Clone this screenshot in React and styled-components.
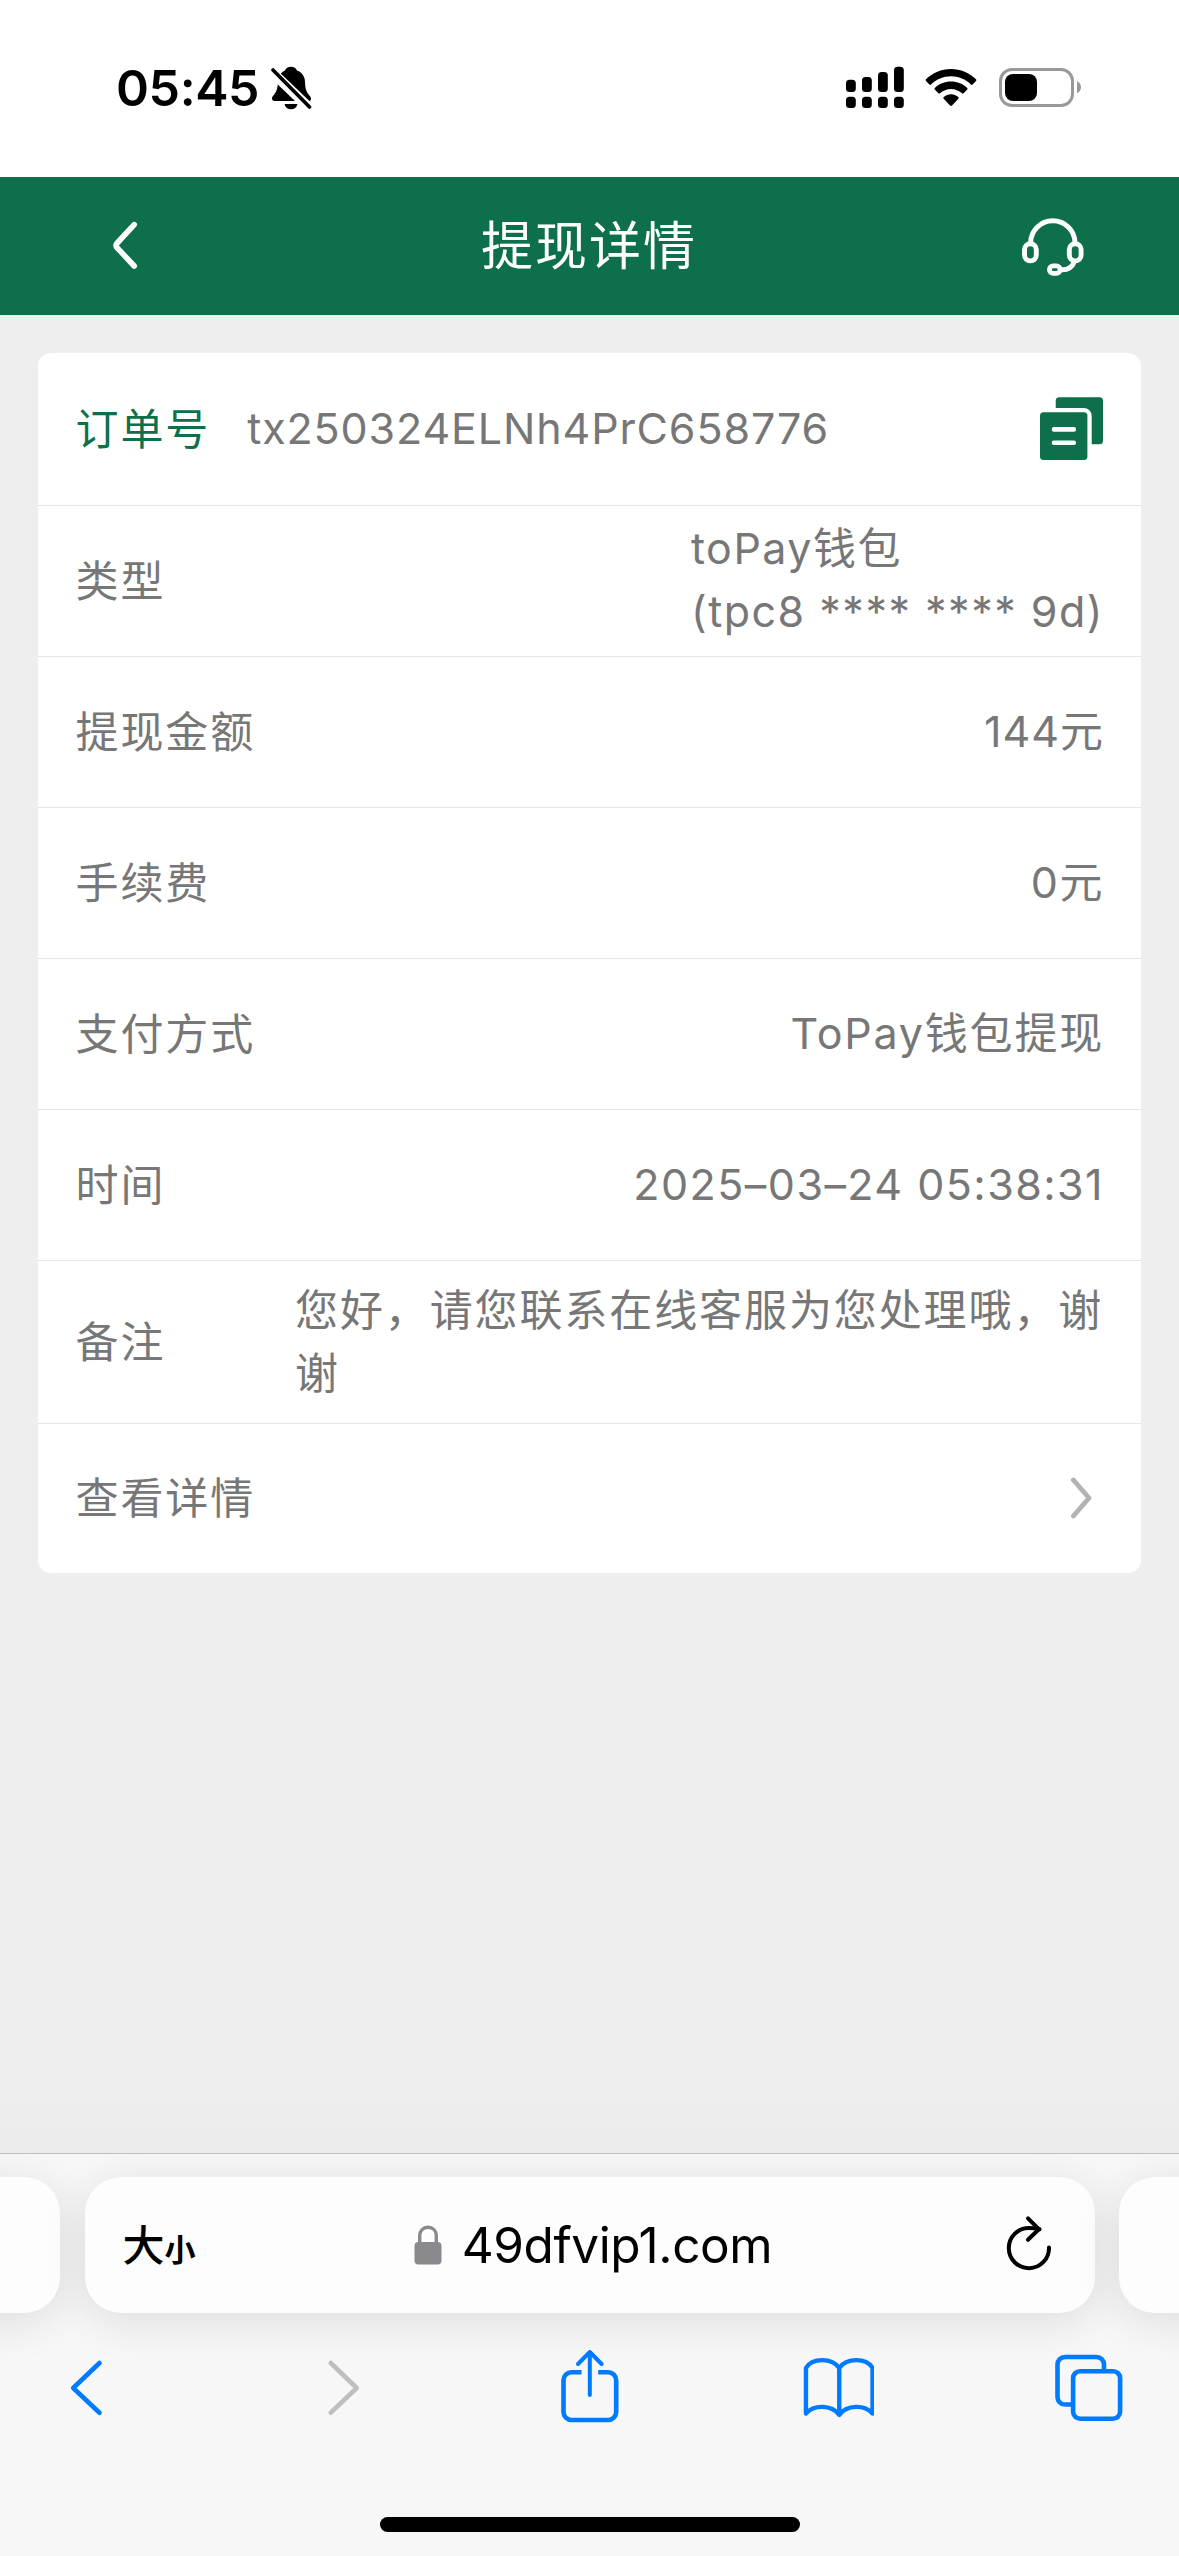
import React from "react";
import styled, { createGlobalStyle } from "styled-components";

const GREEN = "#0e704a";
const BLUE = "#007aff";
const SANS = `Inter, "Noto Sans CJK SC", sans-serif`;

const GlobalStyle = createGlobalStyle`
  *, *::before, *::after { box-sizing: border-box; }
  html, body { margin: 0; padding: 0; background: #eeeeee; }
  body { font-family: ${SANS}; }
  svg { display: block; flex: none; }
`;

const Screen = styled.div`
  width: 1179px;
  height: 2556px;
  display: flex;
  flex-direction: column;
  background: #eeeeee;
  overflow: hidden;
`;

const StatusBar = styled.header`
  height: 177px;
  padding: 0 98px 2px 116px;
  display: flex;
  align-items: center;
  justify-content: space-between;
  background: #fff;
`;

const StatusGroup = styled.div`
  display: flex;
  align-items: center;
  gap: ${(p) => p.$gap}px;
`;

const Clock = styled.span`
  width: 142px;
  font-size: 50px;
  line-height: 60px;
  font-weight: 600;
  letter-spacing: -0.4px;
  color: #000;
  white-space: nowrap;
`;

const NavBar = styled.nav`
  height: 138px;
  padding: 0 93px 0 109px;
  display: grid;
  grid-template-columns: 1fr auto 1fr;
  align-items: center;
  background: ${GREEN};
`;

const NavButton = styled.button`
  border: 0;
  padding: 0;
  background: none;
  justify-self: ${(p) => p.$side};
`;

const NavTitle = styled.h1`
  margin: 2px 0 0 -17px;
  font-size: 52px;
  line-height: 70px;
  font-weight: 400;
  letter-spacing: 2px;
  color: #fff;
`;

const Main = styled.main`
  flex: 1;
  padding: 38px 38px 0;
  background: linear-gradient(#eeeeee 0, #eeeeee 1770px, #ebebeb 100%);
`;

const Card = styled.section`
  border-radius: 13px;
  background: #fff;
  overflow: hidden;
`;

const Row = styled.div`
  height: ${(p) => p.$height || 151}px;
  padding: 0 38px 0 37.5px;
  display: flex;
  align-items: center;
  border-bottom: ${(p) => (p.$last ? 0 : "1px solid #e4e4e4")};
`;

const Label = styled.span`
  flex: none;
  font-size: 43px;
  line-height: 63px;
  letter-spacing: 1.9px;
  color: ${(p) => (p.$accent ? GREEN : "#777")};
`;

const Value = styled.span`
  margin-left: ${(p) => (p.$start ? "37px" : "auto")};
  margin-right: ${(p) => (p.$start ? "auto" : "-1px")};
  margin-bottom: ${(p) => (p.$width ? 0 : 2)}px;
  width: ${(p) => (p.$width ? `${p.$width}px` : "auto")};
  font-size: 43px;
  line-height: 63px;
  letter-spacing: ${(p) => p.$tracking ?? 1}px;
  color: #777;
  white-space: ${(p) => (p.$width ? "normal" : "pre")};
`;

const Push = styled.span`
  margin-left: auto;
  margin-right: ${(p) => p.$inset || 0}px;
`;

const BrowserBar = styled.footer`
  height: 403px;
  border-top: 1px solid #bcbcbc;
  background: #f7f7f7;
  display: flex;
  flex-direction: column;
  overflow: hidden;
`;

const TabStrip = styled.div`
  height: 160px;
  padding-top: 23px;
  display: flex;
  justify-content: center;
  gap: 24.5px;
`;

const TabPill = styled.div`
  flex: none;
  height: 136px;
  width: ${(p) => (p.$main ? 1010 : 400)}px;
  padding: 0 42px 0 38px;
  display: grid;
  grid-template-columns: 110px 1fr 110px;
  align-items: center;
  border-radius: 36px;
  background: #fdfdfd;
  box-shadow: 0 8px 46px rgba(0, 0, 0, 0.11);
`;

const TextSize = styled.span`
  font-family: "Noto Sans CJK SC", sans-serif;
  font-size: 42px;
  line-height: 60px;
  font-weight: 500;
  color: #000;
  white-space: nowrap;
`;

const SmallGlyph = styled.span`
  font-size: 31px;
  font-weight: 700;
`;

const Address = styled.div`
  padding-left: 11px;
  display: flex;
  align-items: center;
  justify-content: center;
  gap: 20px;
`;

const Host = styled.span`
  font-size: 49.5px;
  line-height: 60px;
  letter-spacing: -0.4px;
  color: #000;
`;

const ReloadButton = styled(NavButton)`
  justify-self: end;
  margin-bottom: 5px;
`;

const Toolbar = styled.div`
  margin-top: 34px;
  padding: 0 54px 0 50px;
  display: flex;
  justify-content: space-between;
`;

const HomeIndicator = styled.div`
  width: 420px;
  height: 15px;
  margin: 93px auto 0;
  border-radius: 8px;
  background: #000;
`;

const MutedBell = () => (
  <svg width="42" height="46" viewBox="0 0 42 46">
    <path d="M21 1.8c3 0 5.200 1.400 6 3.800 5.200 2 7.800 6 8 11.200.3 7.200 1.200 10 4 13.200 1.600 1.800 2 3 2 4.200 0 1-1 1.800-2.200 1.800H4.600C3 36 2 35 2 33.600c0-1.600.8-2.600 2.400-4.400C7 26 7.700 22 8 17c.2-5.600 2.800-9.600 7-11.400.8-2.400 3-3.800 6-3.800z" />
    <path d="M14.500 39h13c-.6 3.400-3.200 5.300-6.500 5.300s-5.900-1.900-6.500-5.300z" />
    <path d="M1 6 40.500 44" stroke="#fff" strokeWidth="10" />
    <path d="M3 5 39.500 42" stroke="#000" strokeWidth="3.600" strokeLinecap="round" />
  </svg>
);

const Signal = () => (
  <svg width="58" height="44" viewBox="846 66 58 44">
    <rect x="846" y="79.700" width="9.800" height="12.300" rx="3.500" />
    <rect x="862" y="77" width="9.800" height="15" rx="3.500" />
    <rect x="878" y="72" width="9.800" height="20" rx="3.500" />
    <rect x="894" y="66.700" width="9.800" height="25.300" rx="3.500" />
    {[846, 862, 878, 894].map((x) => (
      <rect key={x} x={x} y="96.700" width="9.800" height="11.300" rx="3.500" />
    ))}
  </svg>
);

const Wifi = () => (
  <svg width="52" height="44" viewBox="925.500 66 52 44">
    <path d="M951.500 69c9.600 0 18.500 3.800 25 10.300.5.500.5 1.200 0 1.700l-3.400 3.500c-.5.500-1.200.5-1.700 0-5.300-5.200-12.200-8.200-19.900-8.200s-14.600 3-19.900 8.200c-.5.500-1.200.5-1.700 0l-3.400-3.500c-.5-.5-.5-1.200 0-1.700 6.500-6.500 15.400-10.300 25-10.300z" />
    <path d="M951.500 81.600c6.300 0 12 2.400 16.200 6.300.5.500.5 1.200 0 1.700l-3.500 3.600c-.5.500-1.200.5-1.700 0-3-2.700-6.800-4.300-11-4.300s-8 1.600-11 4.300c-.5.500-1.200.5-1.700 0l-3.500-3.600c-.5-.5-.5-1.200 0-1.700 4.200-3.900 9.900-6.300 16.200-6.300z" />
    <path d="M951.500 94.300c2.800 0 5.400 1.100 7.300 2.800.5.500.5 1.200 0 1.700l-6.300 6.700c-.6.600-1.400.6-2 0l-6.300-6.700c-.5-.5-.5-1.200 0-1.700 1.900-1.700 4.500-2.800 7.300-2.800z" />
  </svg>
);

const Battery = () => (
  <svg width="82" height="44" viewBox="999 66 82 44">
    <rect x="1000.500" y="69.500" width="72" height="36" rx="11.500" fill="none" stroke="#999" strokeWidth="3" />
    <rect x="1005" y="74" width="32" height="27" rx="8" />
    <path d="M1077 81.300c2.500 1 4 3.400 4 6s-1.500 5-4 6z" fill="#999" />
  </svg>
);

const BackChevron = () => (
  <svg width="32" height="54" viewBox="109 219 32 54" fill="none" stroke="#fff" strokeWidth="5.600" strokeLinecap="round" strokeLinejoin="round">
    <path d="M134.200 224.600 117.200 243Q115 245.400 117.200 247.800L134.200 266" />
  </svg>
);

const Headset = () => (
  <svg width="66" height="62" viewBox="1020 214.500 66 62" fill="none" stroke="#fff" strokeWidth="4.900" strokeLinecap="round">
    <path d="M1030.600 242.500a22.200 22.200 0 0 1 44.400 0" />
    <rect x="1024.500" y="243.200" width="11.800" height="17.200" rx="5.900" />
    <rect x="1069.300" y="243.200" width="11.800" height="17.200" rx="5.900" />
    <rect x="1049.500" y="265.400" width="10.600" height="7.500" rx="3.700" />
    <path d="M1074 262c-2 4.600-6 7.300-11.500 7.300" />
  </svg>
);

const CopyIcon = () => (
  <svg width="64" height="64" viewBox="1039 397 64 64" fill={GREEN}>
    <path d="M1055.700 408v-7.200a3.500 3.500 0 0 1 3.500-3.500h40.300a3.500 3.500 0 0 1 3.500 3.500v40a3.500 3.500 0 0 1-3.500 3.500h-7.800V416a8 8 0 0 0-8-8z" />
    <rect x="1040" y="412.300" width="47.400" height="47.600" rx="3.500" />
    <path d="M1054 429.400h19.800M1054 442.700h19.800" stroke="#fff" strokeWidth="4.600" strokeLinecap="round" />
  </svg>
);

const RowChevron = () => (
  <svg width="24" height="44" viewBox="1069 1476.500 24 44" fill="none" stroke="#b2b2b2" strokeWidth="4.800" strokeLinecap="round" strokeLinejoin="round">
    <path d="M1073.400 1479.500 1089 1497.500 1073.400 1515.500" />
  </svg>
);

const Lock = () => (
  <svg width="28" height="40" viewBox="0 0 28 40">
    <rect x="0.500" y="17" width="27" height="22.500" rx="4" fill="#8a8a8e" />
    <path d="M5.700 18v-7.200C5.700 5.700 9.200 2.300 14 2.300s8.300 3.400 8.300 8.500V18" fill="none" stroke="#8a8a8e" strokeWidth="3.400" />
  </svg>
);

const Reload = () => (
  <svg width="48" height="58" viewBox="1005 2214 48 58" fill="none" stroke="#000" strokeWidth="4" strokeLinecap="round" strokeLinejoin="round">
    <path d="M1049 2247.500a20.100 20.100 0 1 1-20.100-19.500c3.600 0 7 .3 10.600 1.200" />
    <path d="M1028 2218.300 1038.800 2229.200 1028 2239.800" />
  </svg>
);

const ToolIcon = ({ x, color = BLUE, children }) => (
  <svg width="72" height="76" viewBox={`${x} 2348 72 76`} fill="none" stroke={color} strokeWidth="4.600" strokeLinecap="round" strokeLinejoin="round">
    {children}
  </svg>
);

const details = [
  { label: "提现金额", value: "144元", tracking: 1 },
  { label: "手续费", value: "0元", tracking: 1.6 },
  { label: "支付方式", value: "ToPay钱包提现", tracking: 1.8 },
  { label: "时间", value: "2025–03–24 05:38:31", tracking: 1.45 },
];

export default function App() {
  return (
    <Screen>
      <GlobalStyle />
      <StatusBar>
        <StatusGroup $gap={12}>
          <Clock>05:45</Clock>
          <MutedBell />
        </StatusGroup>
        <StatusGroup $gap={21.7}>
          <Signal />
          <Wifi />
          <Battery />
        </StatusGroup>
      </StatusBar>

      <NavBar>
        <NavButton $side="start" aria-label="返回"><BackChevron /></NavButton>
        <NavTitle>提现详情</NavTitle>
        <NavButton $side="end" aria-label="客服"><Headset /></NavButton>
      </NavBar>

      <Main>
        <Card>
          <Row $height={153}>
            <Label $accent>订单号</Label>
            <Value $start $tracking={0.87}>tx250324ELNh4PrC658776</Value>
            <Push><CopyIcon /></Push>
          </Row>
          <Row>
            <Label>类型</Label>
            <Value $tracking={1.5}>{"toPay钱包\n(tpc8 **** **** 9d)"}</Value>
          </Row>
          {details.map((d) => (
            <Row key={d.label}>
              <Label>{d.label}</Label>
              <Value $tracking={d.tracking}>{d.value}</Value>
            </Row>
          ))}
          <Row $height={163}>
            <Label>备注</Label>
            <Value $width={809} $tracking={1.9}>您好，请您联系在线客服为您处理哦，谢谢</Value>
          </Row>
          <Row $height={149} $last>
            <Label>查看详情</Label>
            <Push $inset={10}><RowChevron /></Push>
          </Row>
        </Card>
      </Main>

      <BrowserBar>
        <TabStrip>
          <TabPill />
          <TabPill $main>
            <TextSize>大<SmallGlyph>小</SmallGlyph></TextSize>
            <Address>
              <Lock />
              <Host>49dfvip1.com</Host>
            </Address>
            <ReloadButton aria-label="刷新"><Reload /></ReloadButton>
          </TabPill>
          <TabPill />
        </TabStrip>
        <Toolbar>
          <ToolIcon x={50}><path d="M99.500 2363 73.200 2388 99.500 2412.700" /></ToolIcon>
          <ToolIcon x={300.75} color="#bfbfbf"><path d="M330.500 2363 356.500 2388 330.500 2412.700" /></ToolIcon>
          <ToolIcon x={551.5}>
            <path d="M581 2372.300h-10a8 8 0 0 0-8 8v31.700a8 8 0 0 0 8 8h36.700a8 8 0 0 0 8-8v-31.700a8 8 0 0 0-8-8h-10" strokeLinecap="butt" />
            <path d="M589.300 2395V2352M577.500 2364l11.800-12 11.800 12" strokeWidth="4" />
          </ToolIcon>
          <ToolIcon x={802.25} >
            <path d="M806.200 2413.500v-45.500c6-10.500 26-10.500 33.300 0 7.300-10.500 27.300-10.500 33.300 0v45.500c-8-9-25.500-9-33.300 1.300-7.800-10.300-25.300-10.300-33.300-1.300zM839.500 2368v46.500" strokeWidth="4.400" />
          </ToolIcon>
          <ToolIcon x={1053}>
            <rect x="1073.100" y="2371.200" width="47" height="47.500" rx="7" />
            <path d="M1071 2404.500h-6a7.500 7.500 0 0 1-7.500-7.500v-32.500a7.500 7.500 0 0 1 7.500-7.500h31.500a7.500 7.500 0 0 1 7.500 7.500v5" strokeLinecap="butt" />
          </ToolIcon>
        </Toolbar>
        <HomeIndicator />
      </BrowserBar>
    </Screen>
  );
}
